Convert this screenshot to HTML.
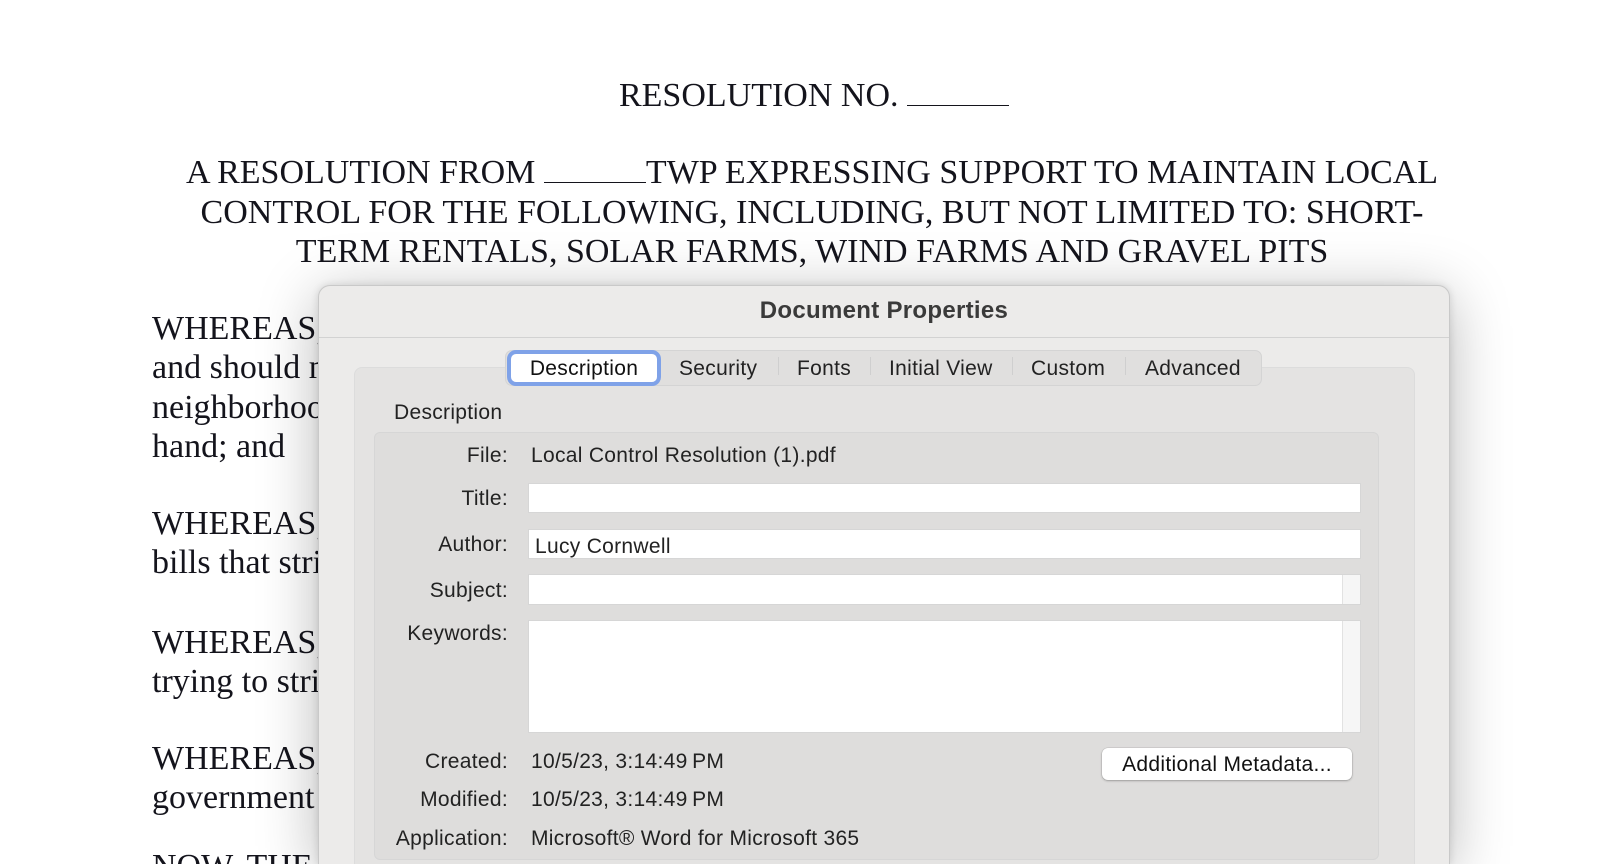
<!DOCTYPE html>
<html><head><meta charset="utf-8"><style>
*{margin:0;padding:0;box-sizing:border-box}
html,body{width:1600px;height:864px;overflow:hidden}
body{background:#fff;position:relative;font-family:"Liberation Sans",sans-serif}
#w{position:absolute;left:0;top:0;width:1600px;height:864px;overflow:hidden}
.t{position:absolute;font-family:"Liberation Serif",serif;font-size:34px;color:#14141c;white-space:nowrap;line-height:40px}
.c{left:0;width:1600px;text-align:center}
.u{display:inline-block;border-bottom:1px solid #14141c;height:30px;vertical-align:baseline}
.dlg{position:absolute;left:318px;top:285px;width:1132px;height:579px;background:#ecebea;border:1px solid #c9c9c9;border-bottom:none;border-radius:12px 12px 0 0;box-shadow:0 10px 60px rgba(0,0,0,.28),0 0 8px rgba(0,0,0,.12)}
.a{position:absolute;white-space:nowrap}
.s{font-size:21px;color:#222;line-height:24px;letter-spacing:0.3px}
.lbl{text-align:right;width:200px;left:308px}
.fld{position:absolute;background:#fff;left:528px;width:833px;border:1px solid #d6d6d6}
.sep{position:absolute;top:357px;width:1px;height:18px;background:#cfcfcf}
</style></head><body><div id="w">
<div class="t c" style="top:76px;left:14px">RESOLUTION NO. <span class="u" style="width:102px"></span></div>
<div class="t c" style="top:153px;left:12px">A RESOLUTION FROM <span class="u" style="width:102px"></span>TWP EXPRESSING SUPPORT TO MAINTAIN LOCAL</div>
<div class="t c" style="top:193px;left:12px">CONTROL FOR THE FOLLOWING, INCLUDING, BUT NOT LIMITED TO: SHORT-</div>
<div class="t c" style="top:232px;left:12px">TERM RENTALS, SOLAR FARMS, WIND FARMS AND GRAVEL PITS</div>
<div class="t" style="left:152px;top:309px">WHEREAS,</div>
<div class="t" style="left:152px;top:348px">and should maintain</div>
<div class="t" style="left:152px;top:388px">neighborhoods</div>
<div class="t" style="left:152px;top:427px">hand; and</div>
<div class="t" style="left:152px;top:504px">WHEREAS,</div>
<div class="t" style="left:152px;top:543px">bills that strip</div>
<div class="t" style="left:152px;top:623px">WHEREAS,</div>
<div class="t" style="left:152px;top:662px">trying to strip</div>
<div class="t" style="left:152px;top:739px">WHEREAS,</div>
<div class="t" style="left:152px;top:778px">government</div>
<div class="t" style="left:152px;top:847px;height:17px;overflow:hidden">NOW, THE</div>
<div class="t" style="left:1440px;top:388px;color:#2a2a5a">t</div>
<div class="dlg"></div>
<div class="a" style="left:318px;top:297px;width:1132px;text-align:center;font-size:24px;font-weight:bold;color:#3a3a3a;line-height:28px;letter-spacing:0.3px">Document Properties</div>
<div class="a" style="left:319px;top:337px;width:1130px;height:1px;background:#d2d2d2"></div>
<div class="a" style="left:354px;top:367px;width:1061px;height:497px;background:#e4e3e2;border:1px solid #dcdcdc;border-bottom:none;border-radius:8px 8px 0 0"></div>
<div class="a" style="left:505px;top:350px;width:757px;height:36px;background:#e0dfde;border:1px solid #d4d4d4;border-radius:7px"></div>
<div class="a" style="left:507px;top:350px;width:154px;height:36px;background:#fff;border:4px solid #7fa2e8;border-radius:9px"></div>
<div class="a s" style="left:507px;top:357px;width:154px;text-align:center;color:#111">Description</div>
<div class="a s" style="left:679px;top:357px">Security</div>
<div class="sep" style="left:778px"></div>
<div class="a s" style="left:797px;top:357px">Fonts</div>
<div class="sep" style="left:870px"></div>
<div class="a s" style="left:889px;top:357px">Initial View</div>
<div class="sep" style="left:1012px"></div>
<div class="a s" style="left:1031px;top:357px">Custom</div>
<div class="sep" style="left:1125px"></div>
<div class="a s" style="left:1145px;top:357px">Advanced</div>
<div class="a s" style="left:394px;top:401px">Description</div>
<div class="a" style="left:374px;top:432px;width:1005px;height:428px;background:#dedddc;border:1px solid #d6d6d6;border-radius:6px"></div>
<div class="a s lbl" style="top:444px">File:</div><div class="a s" style="left:531px;top:444px">Local Control Resolution (1).pdf</div>
<div class="a s lbl" style="top:487px">Title:</div><div class="fld" style="top:483px;height:30px"></div>
<div class="a s lbl" style="top:533px">Author:</div><div class="fld" style="top:529px;height:30px"></div><div class="a s" style="left:535px;top:535px">Lucy Cornwell</div>
<div class="a s lbl" style="top:579px">Subject:</div><div class="fld" style="top:574px;height:31px"></div><div class="a" style="left:1342px;top:575px;width:18px;height:29px;background:#f6f6f6;border-left:1px solid #e2e2e2"></div>
<div class="a s lbl" style="top:622px">Keywords:</div><div class="fld" style="top:620px;height:113px"></div><div class="a" style="left:1342px;top:621px;width:18px;height:111px;background:#f6f6f6;border-left:1px solid #e2e2e2"></div>
<div class="a s lbl" style="top:750px">Created:</div><div class="a s" style="left:531px;top:750px">10/5/23, 3:14:49&#8201;PM</div>
<div class="a s lbl" style="top:788px">Modified:</div><div class="a s" style="left:531px;top:788px">10/5/23, 3:14:49&#8201;PM</div>
<div class="a s lbl" style="top:827px">Application:</div><div class="a s" style="left:531px;top:827px">Microsoft® Word for Microsoft 365</div>
<div class="a" style="left:1102px;top:748px;width:250px;height:32px;background:#fff;border-radius:6px;box-shadow:0 1px 2px rgba(0,0,0,.25),0 0 0 .5px rgba(0,0,0,.12)"></div>
<div class="a s" style="left:1102px;top:753px;width:250px;text-align:center;color:#111">Additional Metadata...</div>
</div></body></html>
